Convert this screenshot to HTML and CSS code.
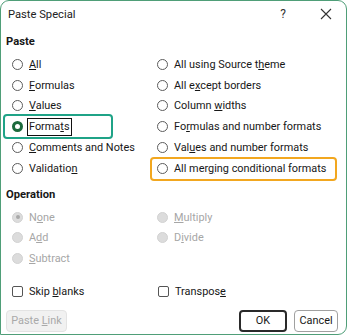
FILE: index.html
```html
<!DOCTYPE html>
<html>
<head>
<meta charset="utf-8">
<link rel="stylesheet" href="styles.css">
</head>
<body>
<div class="dialog">
  <div class="titlebar">
    <span class="title">Paste Special</span>
    <span class="help">?</span>
    <span class="close">
      <svg width="12" height="12" viewBox="0 0 12 12"><path d="M1 1L11 11M11 1L1 11" stroke="#333" stroke-width="1.1" fill="none"/></svg>
    </span>
  </div>
  <div class="section-title">Paste</div>
  <div class="grid">
    <div class="opt"><span class="radio"></span><span><u>A</u>ll</span></div>
    <div class="opt"><span class="radio"></span><span>All using Source t<u>h</u>eme</span></div>
    <div class="opt"><span class="radio"></span><span><u>F</u>ormulas</span></div>
    <div class="opt"><span class="radio"></span><span>All e<u>x</u>cept borders</span></div>
    <div class="opt"><span class="radio"></span><span><u>V</u>alues</span></div>
    <div class="opt"><span class="radio"></span><span>Column <u>w</u>idths</span></div>
    <div class="opt hl-green"><span class="radio checked"></span><span class="focus">Forma<u>t</u>s</span></div>
    <div class="opt"><span class="radio"></span><span>Fo<u>r</u>mulas and number formats</span></div>
    <div class="opt"><span class="radio"></span><span><u>C</u>omments and Notes</span></div>
    <div class="opt"><span class="radio"></span><span>Val<u>u</u>es and number formats</span></div>
    <div class="opt"><span class="radio"></span><span>Validatio<u>n</u></span></div>
    <div class="opt hl-orange"><span class="radio"></span><span>All mer<u>g</u>ing conditional formats</span></div>
  </div>
  <div class="section-title op">Operation</div>
  <div class="grid disabled">
    <div class="opt"><span class="radio dis sel"></span><span>N<u>o</u>ne</span></div>
    <div class="opt"><span class="radio dis"></span><span><u>M</u>ultiply</span></div>
    <div class="opt"><span class="radio dis"></span><span>A<u>d</u>d</span></div>
    <div class="opt"><span class="radio dis"></span><span>D<u>i</u>vide</span></div>
    <div class="opt"><span class="radio dis"></span><span><u>S</u>ubtract</span></div>
    <div class="opt"></div>
  </div>
  <div class="grid checks">
    <div class="opt"><span class="check"></span><span>Skip <u>b</u>lanks</span></div>
    <div class="opt"><span class="check"></span><span>Transpos<u>e</u></span></div>
  </div>
  <div class="buttons">
    <span class="btn link"><span>Paste <u>L</u>ink</span></span>
    <span class="spacer"></span>
    <span class="btn ok">OK</span>
    <span class="btn cancel">Cancel</span>
  </div>
</div>
</body>
</html>
```
FILE: styles.css
```css
html, body {
  margin: 0;
  padding: 0;
  background: #ffffff;
}
body {
  width: 347px;
  height: 335px;
  overflow: hidden;
  font-family: Roboto, "Noto Sans", sans-serif;
  font-size: 10.9px;
  color: #171717;
}
.dialog {
  box-sizing: border-box;
  width: 347px;
  height: 335px;
  border: 1.5px solid #4f9e78;
  border-radius: 9px 9px 9px 0;
  background: #fff;
  display: flex;
  flex-direction: column;
}
.titlebar {
  display: flex;
  align-items: center;
  height: 26px;
  padding: 0 0 0 7px;
}
.title {
  flex: 1;
  font-size: 11.2px;
  color: #222;
}
.help {
  width: 14px;
  text-align: center;
  font-size: 12px;
  color: #333;
  margin-right: 30px;
}
.close {
  display: flex;
  width: 12px;
  margin-right: 14px;
}
.section-title {
  font-weight: bold;
  font-size: 11.2px;
  padding-left: 5px;
  height: 24px;
  line-height: 24px;
  margin-top: 3px;
}
.section-title.op {
  margin-top: 4px;
}
.grid {
  display: grid;
  grid-template-columns: 145px 1fr;
  padding-left: 11px;
  grid-auto-rows: 20.8px;
}
.opt {
  display: flex;
  align-items: center;
  gap: 6px;
  position: relative;
  white-space: nowrap;
}
.radio {
  box-sizing: border-box;
  width: 11px;
  height: 11px;
  border: 1px solid #5c5c5c;
  border-radius: 50%;
  flex: none;
}
.radio.checked {
  border: 3px solid #1c6a3c;
}
.radio.dis {
  border-color: #d2d2d2;
  background: #dcdcdc;
  position: relative;
}
.radio.sel::after {
  content: "";
  position: absolute;
  left: 2.5px;
  top: 2.5px;
  width: 4px;
  height: 4px;
  border-radius: 50%;
  background: #a8a8a8;
}
.disabled .opt {
  color: #a6a6a6;
}
.focus {
  outline: 1.5px solid #111;
  outline-offset: 0;
  padding: 0 1px;
  margin-left: -1px;
  line-height: 16px;
}
.hl-green::before {
  content: "";
  position: absolute;
  left: -9px;
  top: -2px;
  width: 106px;
  height: 21px;
  border: 2px solid #1fa387;
  border-radius: 4px;
}
.hl-orange::before {
  content: "";
  position: absolute;
  left: -7px;
  top: -1px;
  width: 183px;
  height: 20px;
  border: 2px solid #f2a71f;
  border-radius: 4px;
}
.checks {
  margin-top: 12px;
  padding-left: 11px;
  grid-template-columns: 146px 1fr;
}
.check {
  box-sizing: border-box;
  width: 11px;
  height: 11px;
  border: 1px solid #555;
  border-radius: 2px;
  flex: none;
}
.buttons {
  display: flex;
  align-items: center;
  padding: 8px 8px 0 5px;
  gap: 7px;
}
.spacer {
  flex: 1;
}
.btn {
  box-sizing: border-box;
  height: 22px;
  display: flex;
  align-items: center;
  justify-content: center;
  border-radius: 4px;
}
.link {
  width: 61px;
  background: #f1f1f1;
  border: 1px solid #e3e3e3;
  color: #a9a9a9;
}
.ok {
  width: 48px;
  border: 2px solid #2a2a2a;
}
.cancel {
  width: 44px;
  border: 1px solid #a0a0a0;
}
```
